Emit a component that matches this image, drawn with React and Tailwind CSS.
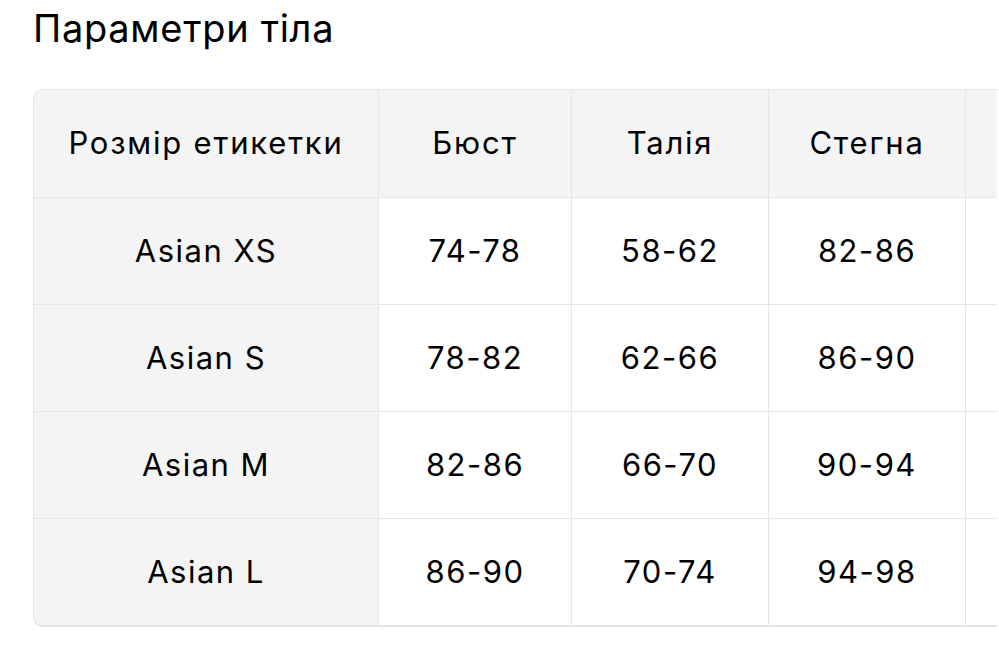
const cols = ["Розмір етикетки", "Бюст", "Талія", "Стегна", ""];
const rows = [
  ["Asian XS", "74-78", "58-62", "82-86"],
  ["Asian S", "78-82", "62-66", "86-90"],
  ["Asian M", "82-86", "66-70", "90-94"],
  ["Asian L", "86-90", "70-74", "94-98"],
];
const widths = ["w-[345px]", "w-[193px]", "w-[197px]", "w-[197px]", "w-[200px]"];

export default function App() {
  return (
    <div className="w-[999px] h-[664px] bg-white overflow-hidden text-black" style={{ fontFamily: "Inter, 'Noto Sans', sans-serif" }}>
      <h1 className="pl-[33px] pt-[8px] text-[38px] leading-[40px] font-normal tracking-[0.7px]">Параметри тіла</h1>
      <div className="ml-[33px] mt-[41px] w-[964px] overflow-hidden rounded-l-[10px] border-l border-t border-b-2 border-[#e4e4e4]">
        <div className="flex w-max">
          {cols.map((c, i) => (
            <div key={i} className={`${widths[i]} shrink-0 h-[107px] bg-[#f4f4f4] flex items-center justify-center text-[31px] font-normal tracking-[1.8px] border-r border-[#e6e6e6]`}>
              {c}
            </div>
          ))}
        </div>
        {rows.map((r, ri) => (
          <div key={ri} className="flex w-max border-t border-[#e6e6e6]">
            {r.concat([""]).map((v, i) => (
              <div
                key={i}
                className={`${widths[i]} shrink-0 h-[106px] flex items-center justify-center text-[31px] font-normal tracking-[1.5px] border-r border-[#e6e6e6] ${i === 0 ? "bg-[#f4f4f4]" : "bg-white"}`}
              >
                {v}
              </div>
            ))}
          </div>
        ))}
      </div>
    </div>
  );
}
